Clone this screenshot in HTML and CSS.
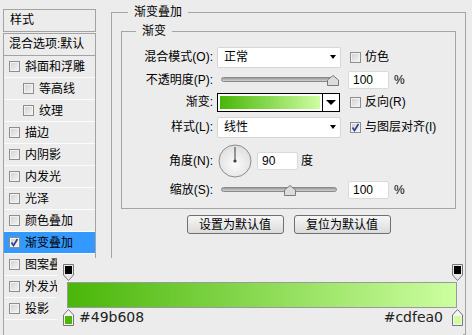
FILE: index.html
```html
<!DOCTYPE html>
<html>
<head>
	<meta charset="utf-8">
	<title>渐变叠加</title>
	<link rel="stylesheet" href="styles.css">
</head>
<body>
	<div class="window">
		<div class="side">
			<div class="side-title">样式</div>
			<div class="side-list">
				<div class="side-head">混合选项:默认</div>
				<div class="item"><span class="cb"></span>斜面和浮雕</div>
				<div class="item sub"><span class="cb"></span>等高线</div>
				<div class="item sub"><span class="cb"></span>纹理</div>
				<div class="item"><span class="cb"></span>描边</div>
				<div class="item"><span class="cb"></span>内阴影</div>
				<div class="item"><span class="cb"></span>内发光</div>
				<div class="item"><span class="cb"></span>光泽</div>
				<div class="item"><span class="cb"></span>颜色叠加</div>
				<div class="item active"><span class="cb checked"><svg viewBox="0 0 9 9"><path d="M1.5 4.5 L3.5 7.5 L7.5 1" fill="none" stroke="#2b3f8f" stroke-width="1.6"/></svg></span>渐变叠加</div>
				<div class="item"><span class="cb"></span>图案叠加</div>
				<div class="item"><span class="cb"></span>外发光</div>
				<div class="item"><span class="cb"></span>投影</div>
			</div>
		</div>

		<fieldset class="group outer">
			<legend>渐变叠加</legend>
			<fieldset class="group inner">
				<legend>渐变</legend>

				<div class="row r1">
					<label class="label">混合模式(O):</label>
					<div class="select"><span>正常</span><span class="arrow"></span></div>
					<div class="check"><span class="cb"></span>仿色</div>
				</div>

				<div class="row r2">
					<label class="label">不透明度(P):</label>
					<div class="slider">
						<div class="track"></div>
						<svg class="thumb" style="left: 110px" viewBox="0 0 12 11" width="12" height="11"><path d="M0.5 10.5 V5 L6 0.5 L11.5 5 V10.5 Z" fill="#dcdcdc" stroke="#7a7a7a"/></svg>
					</div>
					<input class="field" type="text" value="100">
					<span class="unit">%</span>
				</div>

				<div class="row r3">
					<label class="label">渐变:</label>
					<div class="picker">
						<div class="swatch"></div>
						<div class="drop"><span class="arrow big"></span></div>
					</div>
					<div class="check wide"><span class="cb"></span>反向(R)</div>
				</div>

				<div class="row r4">
					<label class="label">样式(L):</label>
					<div class="select"><span>线性</span><span class="arrow"></span></div>
					<div class="check"><span class="cb checked"><svg viewBox="0 0 9 9"><path d="M1.5 4.5 L3.5 7.5 L7.5 1" fill="none" stroke="#2b3f8f" stroke-width="1.6"/></svg></span>与图层对齐(I)</div>
				</div>

				<div class="row r5">
					<label class="label">角度(N):</label>
					<svg class="dial" viewBox="0 0 34 34" width="34" height="34">
						<defs>
							<radialGradient id="dialFill" cx="0.5" cy="0.6" r="0.6">
								<stop offset="0" stop-color="#fbfbfb"/>
								<stop offset="1" stop-color="#dedede"/>
							</radialGradient>
						</defs>
						<circle cx="17" cy="17" r="16" fill="url(#dialFill)" stroke="#8c8c8c"/>
						<line x1="17" y1="17" x2="17" y2="3" stroke="#3a3a3a" stroke-width="1"/>
						<circle cx="17" cy="17" r="1.6" fill="#3a3a3a"/>
					</svg>
					<input class="field angle" type="text" value="90">
					<span class="unit deg">度</span>
				</div>

				<div class="row r6">
					<label class="label">缩放(S):</label>
					<div class="slider">
						<div class="track"></div>
						<svg class="thumb" style="left: 67px" viewBox="0 0 12 11" width="12" height="11"><path d="M0.5 10.5 V5 L6 0.5 L11.5 5 V10.5 Z" fill="#dcdcdc" stroke="#7a7a7a"/></svg>
					</div>
					<input class="field" type="text" value="100">
					<span class="unit">%</span>
				</div>
			</fieldset>

			<div class="buttons">
				<button class="btn">设置为默认值</button>
				<button class="btn">复位为默认值</button>
			</div>
		</fieldset>
	</div>

	<div class="stops">
		<div class="stop-row">
			<svg viewBox="0 0 11 17" width="11" height="17"><path d="M0.5 0.5 H10.5 V11 L5.5 16.5 L0.5 11 Z" fill="#e8e8e8" stroke="#767676"/><rect x="2" y="2" width="7" height="8" fill="#000"/></svg>
			<svg viewBox="0 0 11 17" width="11" height="17"><path d="M0.5 0.5 H10.5 V11 L5.5 16.5 L0.5 11 Z" fill="#e8e8e8" stroke="#767676"/><rect x="2" y="2" width="7" height="8" fill="#000"/></svg>
		</div>
		<div class="bar"></div>
		<div class="stop-row bottom">
			<svg viewBox="0 0 11 17" width="11" height="17"><path d="M0.5 16.5 H10.5 V6 L5.5 0.5 L0.5 6 Z" fill="#f4f4f4" stroke="#767676"/><rect x="2" y="7" width="7" height="8" fill="#49b608"/></svg>
			<span class="hex">#49b608</span>
			<span class="hex end">#cdfea0</span>
			<svg viewBox="0 0 11 17" width="11" height="17"><path d="M0.5 16.5 H10.5 V6 L5.5 0.5 L0.5 6 Z" fill="#f4f4f4" stroke="#767676"/><rect x="2" y="7" width="7" height="8" fill="#cdfea0"/></svg>
		</div>
	</div>
</body>
</html>
```

FILE: styles.css
```css
body {
	margin: 0;
	width: 472px;
	height: 335px;
	overflow: hidden;
	position: relative;
	background: #ececec;
	color: #000;
	font: 12px/16px "Liberation Sans", "Noto Sans CJK SC", sans-serif;
}

.window {
	display: flex;
	align-items: flex-start;
}

/* left list of styles */
.side {
	width: 93px;
	margin: 9px 0 0 3px;
}

.side-title {
	height: 21px;
	line-height: 21px;
	padding-left: 6px;
	border: 1px solid #a3a3a3;
	margin-bottom: 1px;
}

.side-list {
	height: 302px;
	border: 1px solid #a3a3a3;
	border-bottom: none;
	overflow: hidden;
}

.side-head {
	height: 21px;
	line-height: 21px;
	padding-left: 5px;
	border-bottom: 1px solid #a3a3a3;
}

.item {
	height: 21px;
	display: flex;
	align-items: center;
	gap: 5px;
	padding-left: 5px;
	border-bottom: 1px solid #fbfbfb;
}

.item.sub {
	padding-left: 19px;
}

.item.active {
	background: #3399ff;
}

.cb {
	width: 9px;
	height: 9px;
	flex: none;
	border: 1px solid #8e8e8e;
	background: linear-gradient(135deg, #cfcfcf, #f7f7f7);
	box-shadow: inset 0 0 0 1px #f2f2f2;
	display: flex;
}

.cb svg {
	width: 9px;
	height: 9px;
}

/* group boxes */
.group {
	margin: 0;
	padding: 0;
	min-width: 0;
	border: 1px solid #a5a5a5;
}

.group legend {
	padding: 0 6px;
	line-height: 16px;
}

.outer {
	box-sizing: border-box;
	width: 355px;
	height: 331px;
	margin: 4px 0 0 15px;
}

.outer > legend {
	margin-left: 16px;
}

.inner {
	width: 333px;
	margin: 3px 8px 0 9px;
	padding: 6px 0 9px;
}

.inner > legend {
	margin-left: 14px;
}

.row {
	display: flex;
	align-items: center;
}

.r1 { height: 24px; }
.r2 { height: 22px; }
.r3 { height: 22px; }
.r4 { height: 28px; }
.r5 { height: 40px; }
.r6 { height: 18px; }

.label {
	width: 91px;
	margin-right: 4px;
	text-align: right;
	white-space: nowrap;
}

.select {
	width: 124px;
	height: 21px;
	box-sizing: border-box;
	display: flex;
	align-items: center;
	justify-content: space-between;
	padding: 0 4px 0 6px;
	background: #fff;
	border: 1px solid #d6d6d6;
	border-radius: 2px;
}

.arrow {
	width: 0;
	height: 0;
	border-left: 3px solid transparent;
	border-right: 3px solid transparent;
	border-top: 4px solid #000;
}

.arrow.big {
	border-left-width: 5px;
	border-right-width: 5px;
	border-top-width: 5px;
}

.check {
	display: flex;
	align-items: center;
	gap: 4px;
	margin-left: 9px;
	white-space: nowrap;
}

.check.wide {
	margin-left: 10px;
}

.slider {
	position: relative;
	width: 124px;
	height: 11px;
}

.track {
	height: 3px;
	margin: 2px 4px 0;
	border: 1px solid #8a8a8a;
	border-radius: 3px;
	background: linear-gradient(#9a9a9a, #d0d0d0);
}

.thumb {
	position: absolute;
	top: 0;
}

.field {
	width: 41px;
	height: 18px;
	box-sizing: border-box;
	margin: 0 0 0 7px;
	padding: 0 4px;
	border: 1px solid #dadada;
	border-radius: 2px;
	background: #fff;
	font: 12px "Liberation Sans", sans-serif;
	color: #000;
}

.field.angle {
	margin-left: 5px;
}

.unit {
	margin-left: 5px;
}

.unit.deg {
	margin-left: 3px;
}

.picker {
	width: 123px;
	height: 19px;
	box-sizing: border-box;
	display: flex;
	border: 1px solid #000;
	background: #fff;
}

.swatch {
	flex: 1;
	margin: 2px;
	background: linear-gradient(to right, #49b608, #cdfea0);
}

.drop {
	width: 16px;
	display: flex;
	align-items: center;
	justify-content: center;
	border-left: 1px solid #000;
}

.dial {
	margin-left: 1px;
}

.buttons {
	display: flex;
	justify-content: center;
	gap: 10px;
	margin-top: 6px;
}

.btn {
	width: 97px;
	height: 19px;
	padding: 0;
	border: 1px solid #6f6f6f;
	border-radius: 3px;
	background: linear-gradient(#f6f6f6, #dcdcdc);
	font: 12px/16px "Liberation Sans", "Noto Sans CJK SC", sans-serif;
	color: #000;
}

/* gradient stop editor lying over the dialog */
.stops {
	position: absolute;
	left: 57px;
	top: 258px;
	width: 406px;
	height: 77px;
	background: #ececec;
}

.stop-row {
	display: flex;
	justify-content: space-between;
	margin: 6px 0 0 6px;
}

.stop-row.bottom {
	align-items: center;
	margin-top: 1px;
}

.bar {
	height: 24px;
	margin: 1px 6px 0 10px;
	border: 1px solid #9a9a9a;
	background: linear-gradient(to right, #49b608, #cdfea0);
}

.hex {
	margin-left: 5px;
	font: 14px/17px "DejaVu Sans", sans-serif;
	color: #222;
}

.hex.end {
	margin: 0 9px 0 auto;
}
```
